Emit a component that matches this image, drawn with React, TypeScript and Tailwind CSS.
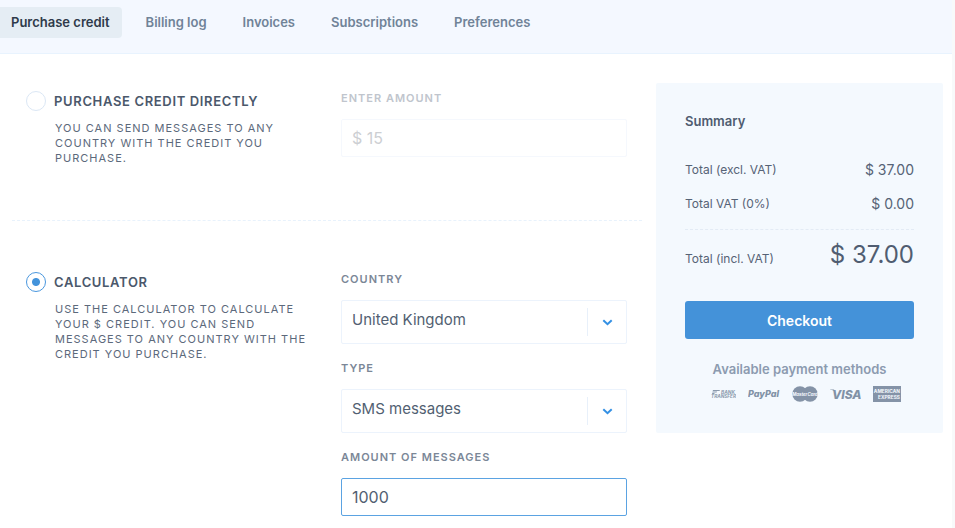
import { useState, type ReactNode } from "react";

const tabs = ["Purchase credit", "Billing log", "Invoices", "Subscriptions", "Preferences"];

function Tabs() {
  return (
    <nav className="flex h-[54px] items-start gap-3 border-b border-[#e8f3fe] bg-[#f4f8ff] pt-[7px]">
      {tabs.map((tab, i) => (
        <a
          key={tab}
          href="#"
          aria-current={i === 0 ? "page" : undefined}
          className={
            i === 0
              ? "h-[31px] rounded-r pr-3 pl-[11px] text-[13px] leading-[31px] font-semibold whitespace-nowrap bg-[#e5edf4] text-[#2f3a4a]"
              : "h-[31px] px-3 text-[13px] leading-[31px] font-semibold whitespace-nowrap text-[#708398]"
          }
        >
          {tab}
        </a>
      ))}
    </nav>
  );
}

type OptionProps = {
  id: string;
  title: string;
  text: string;
  checked: boolean;
  onSelect: () => void;
  className: string;
  children: ReactNode;
};

function Option({ id, title, text, checked, onSelect, className, children }: OptionProps) {
  return (
    <section className={className}>
      <div className="min-w-0 flex-1 pl-[14px]">
        <div className="flex h-[22px] items-center gap-2">
          <input
            id={id}
            type="radio"
            name="method"
            checked={checked}
            onChange={onSelect}
            aria-describedby={id + "-text"}
            className="size-5 shrink-0 appearance-none rounded-full border border-[#dbe7f5] bg-white checked:border-[#4a97de] checked:bg-[radial-gradient(circle,#4393db_3.5px,transparent_4.5px)]"
          />
          <label htmlFor={id} className="text-[13px] leading-5 font-semibold tracking-wider whitespace-nowrap text-[#4b586b] uppercase">
            {title}
          </label>
        </div>
        <p id={id + "-text"} className="mt-[9px] max-w-[290px] pl-[29px] text-[11px] leading-[15px] tracking-[1px] text-[#5c697b] uppercase">
          {text}
        </p>
      </div>
      <div className="mr-[15px] flex w-[286px] shrink-0 flex-col gap-4">{children}</div>
    </section>
  );
}

function Field({ id, label, disabled, children }: { id: string; label: string; disabled?: boolean; children: ReactNode }) {
  return (
    <div>
      <label
        htmlFor={id}
        className={
          disabled
            ? "mb-[13px] block text-[11px] leading-4 font-semibold tracking-[1px] text-[#c0c5cd] uppercase"
            : "mb-[13px] block text-[11px] leading-4 font-semibold tracking-[1px] text-[#7b8797] uppercase"
        }
      >
        {label}
      </label>
      {children}
    </div>
  );
}

function Select({ id, options }: { id: string; options: string[] }) {
  return (
    <div className="relative">
      <select
        id={id}
        className="block h-[44px] w-full appearance-none rounded-xs border border-[#ecf3fc] bg-white pr-12 pb-1 pl-[10px] text-[15px] text-[#525f72] outline-none"
      >
        {options.map((o) => (
          <option key={o}>{o}</option>
        ))}
      </select>
      <span className="pointer-events-none absolute inset-y-2 right-0 flex w-10 items-center justify-center border-l border-[#e8f0fa]">
        <svg width="11" height="7" viewBox="0 0 11 7" fill="none" stroke="#3490e4" strokeWidth="2" aria-hidden="true">
          <path d="M1.3 1.2 5.5 5.2 9.7 1.2" />
        </svg>
      </span>
    </div>
  );
}

function PaymentLogos() {
  return (
    <div className="mt-[7px] flex items-center justify-center gap-3 pl-3">
      <svg width="25" height="16" viewBox="0 0 25 16" role="img" aria-label="Bank transfer" fill="#8a9aad" className="font-bold italic">
        <path d="M2 4h7l-.5 1H1.700zM1.600 5.600h4.500l-.5 1H1.300zM1.200 7.100h2.500l-.4.900H1z" />
        <text x="10" y="7.800" fontSize="4.800">BANK</text>
        <text x="0" y="12.300" fontSize="4.700">TRANSFER</text>
      </svg>
      <svg width="32" height="16" viewBox="0 0 32 16" role="img" aria-label="PayPal" fill="#8192a6" className="font-extrabold italic">
        <text x="0" y="11" fontSize="9">PayPal</text>
      </svg>
      <svg width="26" height="16" viewBox="0 0 26 16" role="img" aria-label="MasterCard" className="font-bold italic">
        <circle cx="8" cy="8" r="7.700" fill="#8493a7" />
        <circle cx="18" cy="8" r="7.700" fill="#8493a7" />
        <text x="13" y="9.700" fontSize="4.400" textAnchor="middle" fill="#f4f9fe">MasterCard</text>
      </svg>
      <svg width="31" height="16" viewBox="0 0 31 16" role="img" aria-label="Visa" fill="#8192a6" className="font-extrabold italic">
        <path d="M0 3.400h4l1.500 3.400C4.300 4.800 2.800 3.900 0 3.700z" />
        <text x="2" y="12.500" fontSize="12">VISA</text>
      </svg>
      <svg width="28" height="16" viewBox="0 0 28 16" role="img" aria-label="American Express" fill="#f4f9fe" className="font-bold">
        <path fill="#8493a7" d="M0 0h28v16H0z" />
        <text x="0.800" y="7.300" fontSize="4.800">AMERICAN</text>
        <text x="5" y="13.300" fontSize="4.800">EXPRESS</text>
      </svg>
    </div>
  );
}

function Summary() {
  return (
    <aside className="mt-[29px] h-[350px] w-[287px] shrink-0 rounded-xs bg-[#f4f9fe] px-[29px] pt-7 text-[#566376]">
      <h2 className="text-[13px] leading-5 font-semibold text-[#4f5c70]">Summary</h2>
      <dl className="text-[12px]">
        <div className="mt-[29px] flex justify-between leading-5">
          <dt>Total (excl. VAT)</dt>
          <dd className="text-[14px]">$ 37.00</dd>
        </div>
        <div className="mt-[14px] flex justify-between leading-5">
          <dt>Total VAT (0%)</dt>
          <dd className="text-[14px]">$ 0.00</dd>
        </div>
        <div className="mt-[15px] flex items-baseline justify-between border-t border-dashed border-[#e3ebf5] pt-[9px]">
          <dt>Total (incl. VAT)</dt>
          <dd className="text-[24px] leading-8 text-[#505d71]">$ 37.00</dd>
        </div>
      </dl>
      <button type="button" className="mt-[30px] h-[38px] w-full rounded-[3px] bg-[#4492d9] text-[14px] font-semibold text-white">
        Checkout
      </button>
      <p className="mt-5 text-center text-[13px] leading-5 font-semibold text-[#8c9bb0]">Available payment methods</p>
      <PaymentLogos />
    </aside>
  );
}

export default function App() {
  const [method, setMethod] = useState("calculator");
  const [messages, setMessages] = useState("1000");

  return (
    <div className="min-h-screen border-r-[3px] border-[#f8f9fa] bg-white font-['Inter','Liberation_Sans',sans-serif]">
      <Tabs />
      <main className="flex gap-[14px] pr-[9px] pl-3">
        <div className="min-w-0 flex-1">
          <Option
            id="direct"
            title="Purchase credit directly"
            text="You can send messages to any country with the credit you purchase."
            checked={method === "direct"}
            onSelect={() => setMethod("direct")}
            className="flex border-b border-dashed border-[#e8f2fc] pt-9 pb-[54px]"
          >
            <Field id="amount" label="Enter amount" disabled>
              <input
                id="amount"
                disabled
                placeholder="$ 15"
                className="block h-[38px] w-full rounded-xs border border-[#f5f8fd] bg-white px-[10px] text-[16px] placeholder:text-[#cdcfd3]"
              />
            </Field>
          </Option>
          <Option
            id="calculator"
            title="Calculator"
            text="Use the calculator to calculate your $ credit. You can send messages to any country with the credit you purchase."
            checked={method === "calculator"}
            onSelect={() => setMethod("calculator")}
            className="flex pt-[50px]"
          >
            <Field id="country" label="Country">
              <Select id="country" options={["United Kingdom"]} />
            </Field>
            <Field id="type" label="Type">
              <Select id="type" options={["SMS messages"]} />
            </Field>
            <Field id="messages" label="Amount of messages">
              <input
                id="messages"
                value={messages}
                onChange={(e) => setMessages(e.target.value)}
                className="block h-[38px] w-full rounded-xs border border-[#5ba3e2] bg-white px-[10px] text-[16px] text-[#525f72] outline-none"
              />
            </Field>
          </Option>
        </div>
        <Summary />
      </main>
    </div>
  );
}
